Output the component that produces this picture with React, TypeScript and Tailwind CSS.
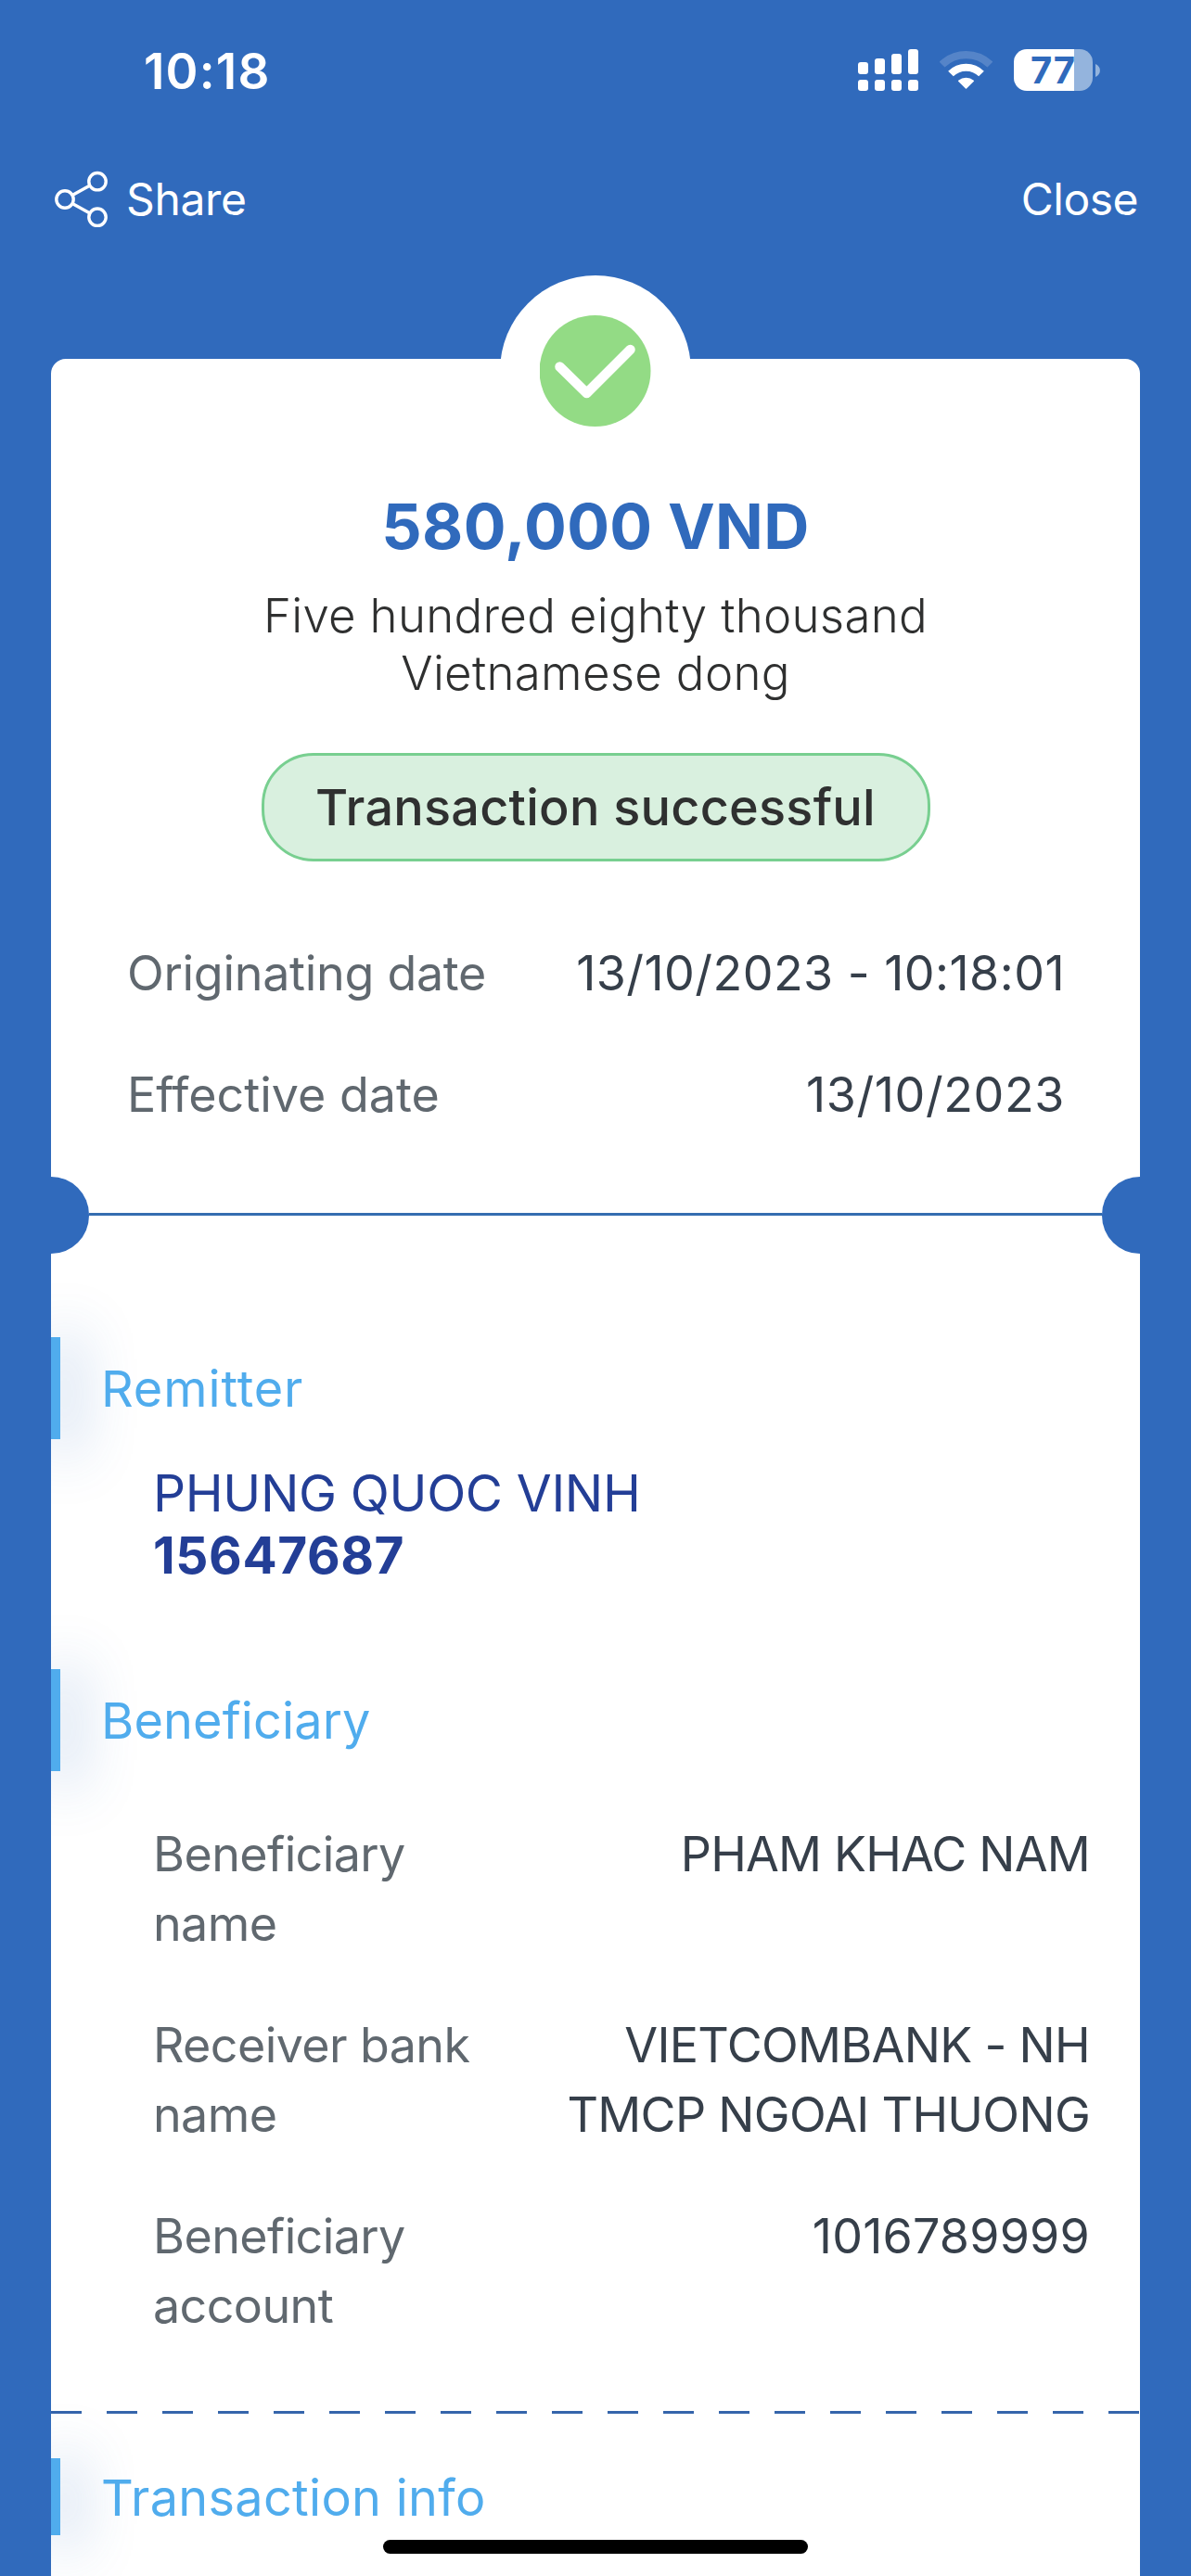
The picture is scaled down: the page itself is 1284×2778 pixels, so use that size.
import clsx from 'clsx';

const dates = [
  { label: 'Originating date', value: '13/10/2023 - 10:18:01', labelClass: 'tracking-[-0.3px]', valueClass: 'tracking-[0.45px]' },
  { label: 'Effective date', value: '13/10/2023', labelClass: 'tracking-normal', valueClass: 'tracking-[0.6px]' },
];

const beneficiary = [
  { label: 'Beneficiary name', value: 'PHAM KHAC NAM', valueClass: 'tracking-[-0.8px]' },
  { label: 'Receiver bank name', value: 'VIETCOMBANK - NH TMCP NGOAI THUONG', valueClass: 'tracking-[-0.7px]' },
  { label: 'Beneficiary account', value: '1016789999', valueClass: 'tracking-[0.2px]' },
];

const SignalIcon = () => (
  <svg width="65" height="45" viewBox="0 0 65 45" fill="white">
    <rect x="0" y="14" width="11" height="13" rx="3" />
    <rect x="18" y="10" width="11" height="17" rx="3" />
    <rect x="36" y="5" width="11" height="22" rx="3" />
    <rect x="54" y="0" width="11" height="27" rx="3" />
    <rect x="0" y="33" width="11" height="12" rx="3" />
    <rect x="18" y="33" width="11" height="12" rx="3" />
    <rect x="36" y="33" width="11" height="12" rx="3" />
    <rect x="54" y="33" width="11" height="12" rx="3" />
  </svg>
);

const WifiIcon = () => (
  <svg width="57" height="45" viewBox="0 0 57 45" fill="none" stroke="white">
    <path d="M2.6 16.6 A37.3 37.3 0 0 1 54.4 16.6" strokeWidth="8.4" opacity="0.18" />
    <path d="M12 26.5 A23.3 23.3 0 0 1 45 26.5" strokeWidth="8" />
    <path d="M28.5 42 L20.7 34.3 A12 12 0 0 1 36.3 34.3 Z" fill="white" strokeWidth="1.5" strokeLinejoin="round" />
  </svg>
);

const BatteryIcon = () => (
  <svg width="93" height="45" viewBox="0 0 93 45" className="overflow-visible">
    <path d="M65 0 H71 A14 14 0 0 1 85 14 V31 A14 14 0 0 1 71 45 H65 Z" fill="#94b4dd" />
    <path d="M65 0 H14 A14 14 0 0 0 0 14 V31 A14 14 0 0 0 14 45 H65 Z" fill="white" />
    <path d="M88 16 C94.5 18.5 94.5 27.5 88 30 Z" fill="#94b4dd" />
    <text x="18" y="37" fontSize="40" fontWeight="700" letterSpacing="0.6" fill="#306abc">77</text>
  </svg>
);

const ShareIcon = () => (
  <svg width="58" height="62" viewBox="0 0 58 62" fill="none" stroke="white" strokeWidth="3.4">
    <circle cx="11" cy="31" r="9.2" />
    <circle cx="46" cy="11.7" r="9.2" />
    <circle cx="46" cy="50.2" r="9.2" />
    <path d="M19 26.5 L38 16 M19 35.5 L38 46" />
  </svg>
);

const SectionTitle = ({ title, className }: { title: string; className?: string }) => (
  <div className={clsx('flex items-center gap-[44px]', className)}>
    <div className="w-[10px] h-full bg-[#50aced] shadow-[10px_6px_60px_10px_rgba(48,106,188,0.25)]" />
    <h2 className="relative pt-[2px] text-[54px] leading-[64px] text-[#50aced]">{title}</h2>
  </div>
);

const App = () => {
  return (
    <div className="relative flex flex-col w-[1284px] h-[2778px] overflow-hidden bg-[#306abc] font-['Inter',sans-serif]">
      <header className="text-white">
        <div className="flex justify-between h-[184px] pt-[47px] pl-[155px] pr-[98px]">
          <span className="text-[53px] leading-[60px] font-semibold tracking-[1.2px]">10:18</span>
          <div className="flex gap-[23px] mt-[6px]">
            <SignalIcon />
            <WifiIcon />
            <BatteryIcon />
          </div>
        </div>
        <div className="flex justify-between h-[62px] pl-[59px] pr-[57px] text-[48px] leading-[62px]">
          <button className="flex items-start gap-[19px] tracking-[-0.35px]">
            <ShareIcon />
            Share
          </button>
          <button className="flex items-start tracking-[-0.5px]">Close</button>
        </div>
      </header>

      <main className="relative flex flex-col flex-1 mt-[141px] mx-[55px] bg-white rounded-t-[16px]">
        <div className="absolute -top-[90px] left-1/2 -translate-x-1/2 flex justify-center w-[206px] h-[206px] pt-[43px] bg-white rounded-full">
          <svg width="120" height="120" viewBox="0 0 120 120" fill="none">
            <circle cx="59.5" cy="60" r="60" fill="#93db85" />
            <path d="M21.5 55.5 L50.5 84 L97.5 37" stroke="white" strokeWidth="10.5" strokeLinecap="round" strokeLinejoin="round" />
          </svg>
        </div>

        <section className="relative flex flex-col items-center pt-[140px] text-center">
          <h1 className="text-[68px] leading-[80px] font-bold tracking-[0.34px] text-[#306abc]">580,000 VND</h1>
          <p className="w-[760px] mt-[26px] text-[51px] leading-[62px] font-light tracking-[0.3px] text-[#2f3030]">
            Five hundred eighty thousand Vietnamese dong
          </p>
          <div className="flex items-center justify-center w-[721px] h-[117px] mt-[55px] pt-[1px] border-[3px] border-[#78cf90] rounded-[56px] bg-[#d9f0df] text-[54px] leading-[64px] font-medium tracking-[0.23px] text-[#2f3030]">
            Transaction successful
          </div>
        </section>

        <section className="flex flex-col gap-[55px] mt-[83px] pl-[82px] pr-[81px] text-[52px] leading-[76px]">
          {dates.map((row) => (
            <div key={row.label} className="flex justify-between">
              <span className={clsx('text-[#60686f]', row.labelClass)}>{row.label}</span>
              <span className={clsx('text-[#363f4a]', row.valueClass)}>{row.value}</span>
            </div>
          ))}
        </section>

        {/* Ticket notches */}
        <div className="flex items-center h-[83px] mt-[50px]">
          <div className="w-[41px] h-full rounded-r-full bg-[#306abc]" />
          <div className="flex-1 h-[3px] mb-[2px] bg-[#356db0]" />
          <div className="w-[41px] h-full rounded-l-full bg-[#306abc]" />
        </div>

        <div className="flex-1 overflow-hidden">
          <SectionTitle title="Remitter" className="h-[110px] mt-[90px] tracking-[0.9px]" />
          <div className="relative mt-[25px] pl-[110px] text-[55px] leading-[67px] text-[#233e96]">
            <p className="tracking-[-0.34px]">PHUNG QUOC VINH</p>
            <p className="font-bold tracking-[0.6px]">15647687</p>
          </div>

          <SectionTitle title="Beneficiary" className="h-[110px] mt-[89px] tracking-[0.13px]" />
          <div className="relative flex flex-col gap-[56px] mt-[52px] pl-[110px] pr-[54px] text-[52px] leading-[75px]">
            {beneficiary.map((row) => (
              <div key={row.label} className="flex justify-between h-[150px]">
                <span className="w-[370px] tracking-[-0.6px] text-[#60686f]">{row.label}</span>
                <span className={clsx('w-[600px] text-right text-[#363f4a]', row.valueClass)}>{row.value}</span>
              </div>
            ))}
          </div>

          <div className="h-[3px] mt-[76px] bg-[repeating-linear-gradient(90deg,#3565ab_0_33px,transparent_33px_60px)]" />
          <SectionTitle title="Transaction info" className="h-[83px] mt-[48px] tracking-[0.29px]" />
        </div>
      </main>

      <div className="absolute bottom-[24px] left-1/2 -translate-x-1/2 w-[458px] h-[15px] rounded-full bg-black" />
    </div>
  );
};

export default App;
